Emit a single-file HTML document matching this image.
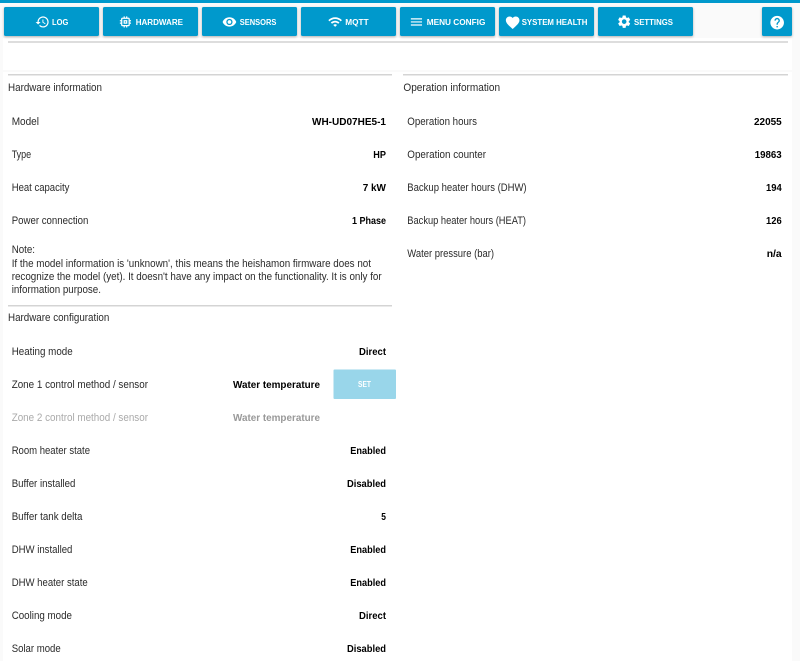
<!DOCTYPE html>
<html><head><meta charset="utf-8"><title>HeishaMon</title>
<style>
html,body{margin:0;padding:0;width:800px;height:661px;overflow:hidden;background:#fafafa}
svg{display:block;filter:blur(.25px)}
text{font-family:"Liberation Sans",sans-serif;font-size:10.7px;fill:#2b2b2b}
.v{font-weight:bold;font-size:10.5px;fill:#000;text-anchor:start}
.d{fill:#aaa}
.dv{font-weight:bold;font-size:10.5px;fill:#999}
.n{font-weight:bold;font-size:8.6px;fill:#fff}
</style></head><body>
<svg width="800" height="661" viewBox="0 0 800 661" xmlns="http://www.w3.org/2000/svg">
<defs>
<filter id="s" x="-10%" y="-20%" width="120%" height="150%"><feDropShadow dx="0" dy="1" stdDeviation="1.2" flood-color="#000" flood-opacity=".3"/></filter>
</defs>
<rect width="800" height="661" fill="#fafafa"/>
<rect x="3" y="38" width="789" height="32" fill="#fff"/>
<rect x="3" y="72" width="789" height="589" fill="#fff"/>
<rect width="800" height="3" fill="#0099cc"/>

<rect x="8" y="41" width="780" height="2" fill="#ddd"/>
<rect x="8" y="74" width="384" height="1.5" fill="#d4d4d4"/>
<rect x="403" y="74" width="385" height="1.5" fill="#d4d4d4"/>
<rect x="8" y="305" width="384" height="1.5" fill="#d4d4d4"/>

<g fill="#0099cc" filter="url(#s)">
<rect x="4" y="7" width="95" height="29" rx="1.5"/>
<rect x="103" y="7" width="95" height="29" rx="1.5"/>
<rect x="202" y="7" width="95" height="29" rx="1.5"/>
<rect x="301" y="7" width="95" height="29" rx="1.5"/>
<rect x="400" y="7" width="95" height="29" rx="1.5"/>
<rect x="499" y="7" width="95" height="29" rx="1.5"/>
<rect x="598" y="7" width="95" height="29" rx="1.5"/>
<rect x="762" y="7" width="30" height="29" rx="1.5"/>
</g>

<g fill="#fff">
<path transform="translate(35 14.5) scale(.62)" d="M13 3c-4.97 0-9 4.03-9 9H1l3.89 3.89.07.14L9 12H6c0-3.87 3.13-7 7-7s7 3.13 7 7-3.13 7-7 7c-1.93 0-3.68-.79-4.94-2.06l-1.42 1.42C8.27 19.99 10.51 21 13 21c4.97 0 9-4.03 9-9s-4.03-9-9-9zm-1 5v5l4.28 2.54.72-1.21-3.5-2.08V8H12z"/>
<path transform="translate(118 14.5) scale(.62)" d="M15 9H9v6h6V9zm-2 4h-2v-2h2v2zm8-2V9h-2V7c0-1.1-.9-2-2-2h-2V3h-2v2h-2V3H9v2H7c-1.1 0-2 .9-2 2v2H3v2h2v2H3v2h2v2c0 1.1.9 2 2 2h2v2h2v-2h2v2h2v-2h2c1.1 0 2-.9 2-2v-2h2v-2h-2v-2h2zm-4 6H7V7h10v10z"/>
<path transform="translate(222 14.5) scale(.62)" d="M12 4.5C7 4.5 2.73 7.61 1 12c1.73 4.39 6 7.5 11 7.5s9.27-3.11 11-7.5c-1.73-4.39-6-7.5-11-7.5zM12 17c-2.76 0-5-2.24-5-5s2.24-5 5-5 5 2.24 5 5-2.24 5-5 5zm0-8c-1.66 0-3 1.34-3 3s1.34 3 3 3 3-1.34 3-3-1.34-3-3-3z"/>
<path transform="translate(327.7 14.5) scale(.62)" d="M1 9l2 2c4.97-4.97 13.03-4.97 18 0l2-2C16.93 2.93 7.08 2.93 1 9zm8 8l3 3 3-3c-1.65-1.66-4.34-1.66-6 0zm-4-4l2 2c2.76-2.76 7.24-2.76 10 0l2-2C15.14 9.14 8.87 9.14 5 13z"/>
<path transform="translate(409 14.5) scale(.62)" d="M3 18h18v-2H3v2zm0-5h18v-2H3v2zm0-7v2h18V6H3z"/>
<path transform="translate(504.5 14.5) scale(.68)" d="M12 21.35l-1.45-1.32C5.4 15.36 2 12.28 2 8.5 2 5.42 4.42 3 7.5 3c1.74 0 3.41.81 4.5 2.09C13.09 3.81 14.76 3 16.5 3 19.58 3 22 5.42 22 8.5c0 3.78-3.4 6.86-8.55 11.54L12 21.35z"/>
<path transform="translate(616.5 14) scale(.64)" d="M19.14 12.94c.04-.3.06-.61.06-.94 0-.32-.02-.64-.07-.94l2.03-1.58c.18-.14.23-.41.12-.61l-1.92-3.32c-.12-.22-.37-.29-.59-.22l-2.39.96c-.5-.38-1.03-.7-1.62-.94l-.36-2.54c-.04-.24-.24-.41-.48-.41h-3.84c-.24 0-.43.17-.47.41l-.36 2.54c-.59.24-1.13.57-1.62.94l-2.39-.96c-.22-.08-.47 0-.59.22L2.74 8.87c-.12.21-.08.47.12.61l2.03 1.58c-.05.3-.09.63-.09.94s.02.64.07.94l-2.03 1.58c-.18.14-.23.41-.12.61l1.92 3.32c.12.22.37.29.59.22l2.39-.96c.5.38 1.03.7 1.62.94l.36 2.54c.05.24.24.41.48.41h3.84c.24 0 .44-.17.47-.41l.36-2.54c.59-.24 1.13-.56 1.62-.94l2.39.96c.22.08.47 0 .59-.22l1.92-3.32c.12-.22.07-.47-.12-.61l-2.01-1.58zM12 15.6c-1.98 0-3.6-1.62-3.6-3.6s1.62-3.6 3.6-3.6 3.6 1.62 3.6 3.6-1.62 3.6-3.6 3.6z"/>
<path transform="translate(769 14.5) scale(.68)" d="M12 2C6.48 2 2 6.48 2 12s4.48 10 10 10 10-4.48 10-10S17.52 2 12 2zm1 17h-2v-2h2v2zm2.07-7.75l-.9.92C13.45 12.9 13 13.5 13 15h-2v-.5c0-1.1.45-2.1 1.17-2.83l1.24-1.26c.37-.36.59-.86.59-1.41 0-1.1-.9-2-2-2s-2 .9-2 2H8c0-2.21 1.79-4 4-4s4 1.79 4 4c0 .88-.36 1.68-.93 2.25z"/>
</g>

<text class="n" x="52" y="25" textLength="16.3" lengthAdjust="spacingAndGlyphs">LOG</text>
<text class="n" x="135.7" y="25" textLength="47.3" lengthAdjust="spacingAndGlyphs">HARDWARE</text>
<text class="n" x="239.7" y="25" textLength="36.7" lengthAdjust="spacingAndGlyphs">SENSORS</text>
<text class="n" x="345.3" y="25" textLength="23.3" lengthAdjust="spacingAndGlyphs">MQTT</text>
<text class="n" x="426.7" y="25" textLength="58.7" lengthAdjust="spacingAndGlyphs">MENU CONFIG</text>
<text class="n" x="521.7" y="25" textLength="65.7" lengthAdjust="spacingAndGlyphs">SYSTEM HEALTH</text>
<text class="n" x="634" y="25" textLength="39" lengthAdjust="spacingAndGlyphs">SETTINGS</text>

<text x="8" y="91" textLength="94" lengthAdjust="spacingAndGlyphs">Hardware information</text>
<text x="403.4" y="91" textLength="96.7" lengthAdjust="spacingAndGlyphs">Operation information</text>

<text x="11.7" y="125" textLength="27.3" lengthAdjust="spacingAndGlyphs">Model</text>
<text class="v" x="312" y="125" textLength="74" lengthAdjust="spacingAndGlyphs">WH-UD07HE5-1</text>
<text x="11.7" y="158" textLength="19.5" lengthAdjust="spacingAndGlyphs">Type</text>
<text class="v" x="373.3" y="158" textLength="12.7" lengthAdjust="spacingAndGlyphs">HP</text>
<text x="11.7" y="191" textLength="57.7" lengthAdjust="spacingAndGlyphs">Heat capacity</text>
<text class="v" x="362.7" y="191" textLength="23.3" lengthAdjust="spacingAndGlyphs">7 kW</text>
<text x="11.7" y="224" textLength="76.7" lengthAdjust="spacingAndGlyphs">Power connection</text>
<text class="v" x="352" y="224" textLength="34" lengthAdjust="spacingAndGlyphs">1 Phase</text>

<text x="407.3" y="125" textLength="69.7" lengthAdjust="spacingAndGlyphs">Operation hours</text>
<text class="v" x="754" y="125" textLength="27.7" lengthAdjust="spacingAndGlyphs">22055</text>
<text x="407.3" y="158" textLength="78.7" lengthAdjust="spacingAndGlyphs">Operation counter</text>
<text class="v" x="754.7" y="158" textLength="27" lengthAdjust="spacingAndGlyphs">19863</text>
<text x="407.3" y="191" textLength="119.3" lengthAdjust="spacingAndGlyphs">Backup heater hours (DHW)</text>
<text class="v" x="766" y="191" textLength="15.7" lengthAdjust="spacingAndGlyphs">194</text>
<text x="407.3" y="224" textLength="118.7" lengthAdjust="spacingAndGlyphs">Backup heater hours (HEAT)</text>
<text class="v" x="766" y="224" textLength="15.7" lengthAdjust="spacingAndGlyphs">126</text>
<text x="407.3" y="257" textLength="86.7" lengthAdjust="spacingAndGlyphs">Water pressure (bar)</text>
<text class="v" x="766.7" y="257" textLength="15" lengthAdjust="spacingAndGlyphs">n/a</text>

<text x="11.7" y="253" textLength="23.3" lengthAdjust="spacingAndGlyphs">Note:</text>
<text x="11.7" y="267" textLength="359.3" lengthAdjust="spacingAndGlyphs">If the model information is 'unknown', this means the heishamon firmware does not</text>
<text x="11.7" y="280" textLength="370" lengthAdjust="spacingAndGlyphs">recognize the model (yet). It doesn't have any impact on the functionality. It is only for</text>
<text x="11.7" y="293" textLength="89.3" lengthAdjust="spacingAndGlyphs">information purpose.</text>

<text x="8" y="321" textLength="101.3" lengthAdjust="spacingAndGlyphs">Hardware configuration</text>

<text x="11.7" y="355" textLength="61" lengthAdjust="spacingAndGlyphs">Heating mode</text>
<text class="v" x="359" y="355" textLength="27" lengthAdjust="spacingAndGlyphs">Direct</text>
<text x="11.7" y="388" textLength="136.3" lengthAdjust="spacingAndGlyphs">Zone 1 control method / sensor</text>
<text class="v" x="233" y="388" textLength="87" lengthAdjust="spacingAndGlyphs">Water temperature</text>
<rect x="333.5" y="369.5" width="62.5" height="29.5" rx="1" fill="#99d6ea"/>
<text class="n" x="358" y="387" textLength="13" lengthAdjust="spacingAndGlyphs">SET</text>
<text class="d" x="11.7" y="421" textLength="136.3" lengthAdjust="spacingAndGlyphs">Zone 2 control method / sensor</text>
<text class="dv" x="233" y="421" textLength="87" lengthAdjust="spacingAndGlyphs">Water temperature</text>
<text x="11.7" y="454" textLength="78.3" lengthAdjust="spacingAndGlyphs">Room heater state</text>
<text class="v" x="350.3" y="454" textLength="35.7" lengthAdjust="spacingAndGlyphs">Enabled</text>
<text x="11.7" y="487" textLength="63.7" lengthAdjust="spacingAndGlyphs">Buffer installed</text>
<text class="v" x="347" y="487" textLength="39" lengthAdjust="spacingAndGlyphs">Disabled</text>
<text x="11.7" y="520" textLength="70.7" lengthAdjust="spacingAndGlyphs">Buffer tank delta</text>
<text class="v" x="381.3" y="520" textLength="4.7" lengthAdjust="spacingAndGlyphs">5</text>
<text x="11.7" y="553" textLength="60.7" lengthAdjust="spacingAndGlyphs">DHW installed</text>
<text class="v" x="350.3" y="553" textLength="35.7" lengthAdjust="spacingAndGlyphs">Enabled</text>
<text x="11.7" y="586" textLength="76" lengthAdjust="spacingAndGlyphs">DHW heater state</text>
<text class="v" x="350.3" y="586" textLength="35.7" lengthAdjust="spacingAndGlyphs">Enabled</text>
<text x="11.7" y="619" textLength="60.3" lengthAdjust="spacingAndGlyphs">Cooling mode</text>
<text class="v" x="359" y="619" textLength="27" lengthAdjust="spacingAndGlyphs">Direct</text>
<text x="11.7" y="652" textLength="49" lengthAdjust="spacingAndGlyphs">Solar mode</text>
<text class="v" x="347" y="652" textLength="39" lengthAdjust="spacingAndGlyphs">Disabled</text>
</svg>
</body></html>
